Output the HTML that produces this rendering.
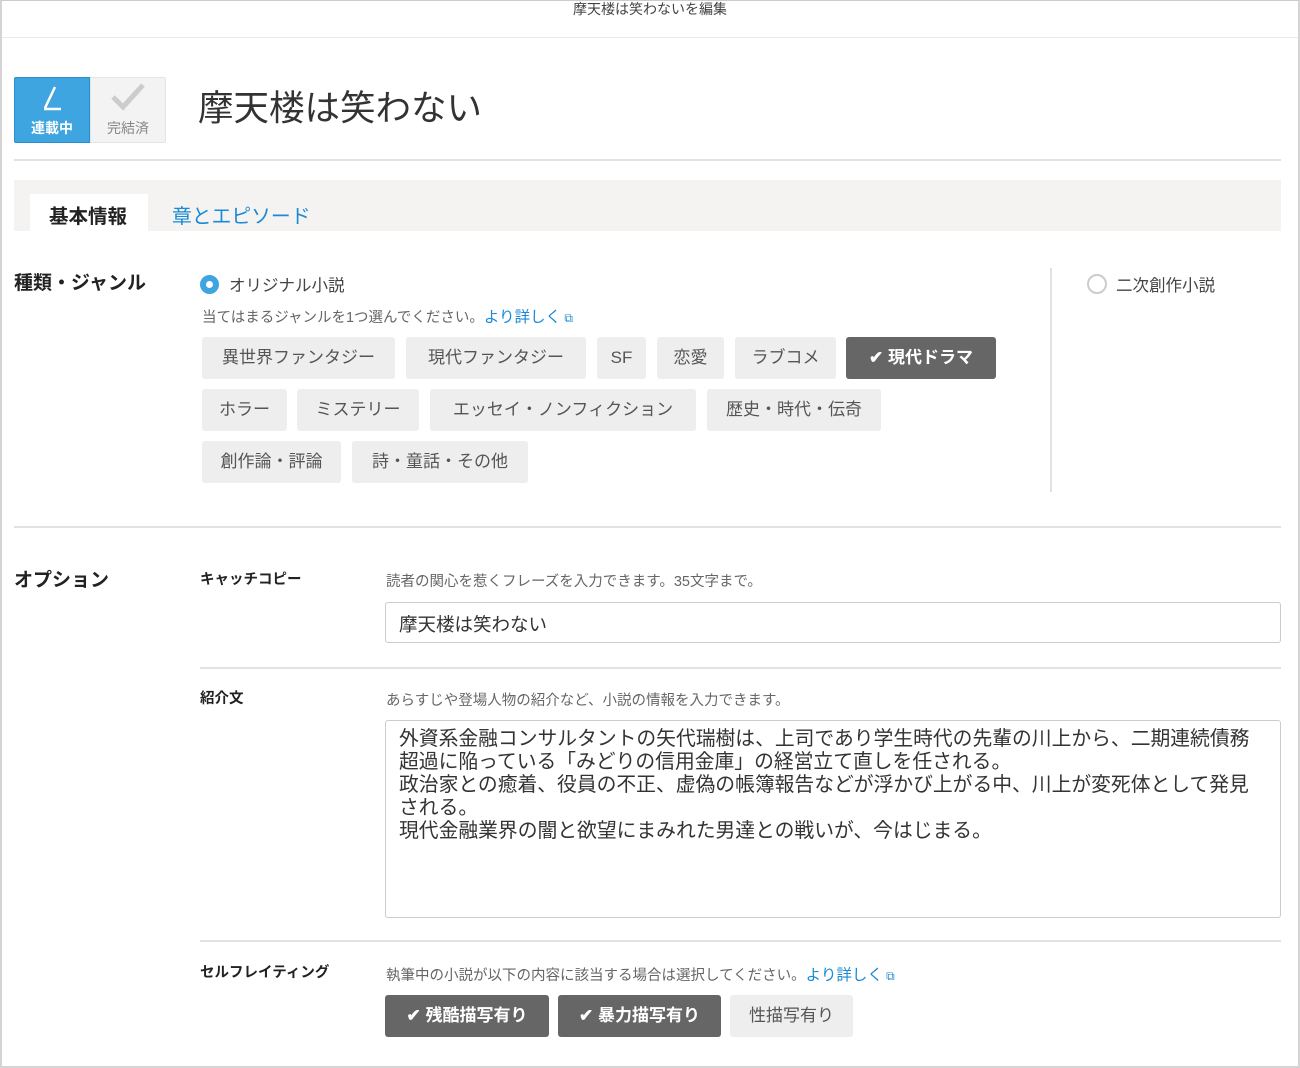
<!DOCTYPE html>
<html><head><meta charset="utf-8"><style>
*{box-sizing:border-box;margin:0;padding:0}
body{width:1300px;height:1068px;background:#fff;font-family:"Liberation Sans","Noto Sans CJK JP",sans-serif;color:#333;position:relative;overflow:hidden}
.a{position:absolute;white-space:nowrap}
.frame{position:absolute;left:0;top:0;width:1300px;height:1068px;border:2px solid #d4d4d4;border-top:1px solid #ccc}
.hl{position:absolute;height:2px;background:#e2e2e2}
.btn{position:absolute;height:42px;background:#eee;border-radius:3px;color:#555;font-size:17px;line-height:42px;text-align:center}
.dk{background:#666;color:#fff;font-weight:bold}
.blue{color:#1a8ad4}
.hint{font-size:14.5px;color:#666}
.lbl{font-size:19px;font-weight:bold;color:#222}
.sl{font-size:14.5px;font-weight:bold;color:#222}
</style></head><body>
<div class="frame"></div>
<div class="a" style="left:0;width:1300px;text-align:center;top:-1px;font-size:14px;color:#444">摩天楼は笑わないを編集</div>
<div class="hl" style="left:2px;width:1296px;top:37px;height:1px;background:#eaeaea"></div>

<div class="a" style="left:14px;top:77px;width:76px;height:66px;background:#3ea5e0;border:1px solid #2a8fcf;border-radius:2px 0 0 2px"></div>
<svg class="a" style="left:38px;top:84px" width="28" height="28" viewBox="0 0 28 28"><path d="M17 3 L7 24 M6 25 H23" stroke="#fff" stroke-width="2.5" fill="none"/></svg>
<div class="a" style="left:14px;top:118px;width:76px;text-align:center;font-size:14px;font-weight:bold;color:#fff">連載中</div>
<div class="a" style="left:90px;top:77px;width:76px;height:66px;background:#f3f3f3;border:1px solid #e4e4e4;border-radius:0 2px 2px 0"></div>
<svg class="a" style="left:110px;top:82px" width="36" height="30" viewBox="0 0 36 30"><path d="M3 15 L13 25 L33 3" stroke="#ccc" stroke-width="5" fill="none"/></svg>
<div class="a" style="left:90px;top:118px;width:76px;text-align:center;font-size:14px;color:#888">完結済</div>
<div class="a" style="left:198px;top:80px;font-size:35.5px;color:#333">摩天楼は笑わない</div>
<div class="hl" style="left:14px;width:1267px;top:159px"></div>

<div class="a" style="left:14px;top:180px;width:1267px;height:51px;background:#f4f3f2"></div>
<div class="a" style="left:30px;top:194px;width:118px;height:37px;background:#fff"></div>
<div class="a lbl" style="left:49px;top:200px;font-size:19.5px">基本情報</div>
<div class="a blue" style="left:172px;top:200px;font-size:19.8px">章とエピソード</div>

<div class="a lbl" style="left:14px;top:268px">種類・ジャンル</div>
<div class="a" style="left:200px;top:275px;width:19px;height:19px;border-radius:50%;border:6px solid #3ea5e0;background:#fff"></div>
<div class="a" style="left:229px;top:272px;font-size:16.5px;color:#444">オリジナル小説</div>
<div class="a hint" style="left:202px;top:305px">当てはまるジャンルを1つ選んでください。<span class="blue" style="font-size:15.5px">より詳しく</span><span class="blue" style="font-size:12px"> ⧉</span></div>

<div class="btn" style="left:202px;top:337px;width:193px">異世界ファンタジー</div>
<div class="btn" style="left:406px;top:337px;width:180px">現代ファンタジー</div>
<div class="btn" style="left:597px;top:337px;width:49px">SF</div>
<div class="btn" style="left:657px;top:337px;width:67px">恋愛</div>
<div class="btn" style="left:735px;top:337px;width:101px">ラブコメ</div>
<div class="btn dk" style="left:846px;top:337px;width:150px">✔ 現代ドラマ</div>
<div class="btn" style="left:202px;top:389px;width:85px">ホラー</div>
<div class="btn" style="left:297px;top:389px;width:122px">ミステリー</div>
<div class="btn" style="left:430px;top:389px;width:266px">エッセイ・ノンフィクション</div>
<div class="btn" style="left:707px;top:389px;width:174px">歴史・時代・伝奇</div>
<div class="btn" style="left:202px;top:441px;width:139px">創作論・評論</div>
<div class="btn" style="left:352px;top:441px;width:176px">詩・童話・その他</div>

<div class="a" style="left:1050px;top:268px;width:2px;height:224px;background:#e2e2e2"></div>
<div class="a" style="left:1087px;top:274px;width:20px;height:20px;border-radius:50%;border:2px solid #ccc"></div>
<div class="a" style="left:1116px;top:272px;font-size:16.5px;color:#444">二次創作小説</div>

<div class="hl" style="left:14px;width:1267px;top:526px"></div>

<div class="a lbl" style="left:14px;top:565px">オプション</div>
<div class="a sl" style="left:200px;top:568px">キャッチコピー</div>
<div class="a hint" style="left:386px;top:570px">読者の関心を惹くフレーズを入力できます。35文字まで。</div>
<div class="a" style="left:385px;top:602px;width:896px;height:41px;border:1px solid #ccc;border-radius:3px"></div>
<div class="a" style="left:399px;top:611px;font-size:18.5px;color:#333">摩天楼は笑わない</div>
<div class="hl" style="left:200px;width:1081px;top:667px"></div>

<div class="a sl" style="left:200px;top:687px">紹介文</div>
<div class="a hint" style="left:386px;top:689px">あらすじや登場人物の紹介など、小説の情報を入力できます。</div>
<div class="a" style="left:385px;top:720px;width:896px;height:198px;border:1px solid #ccc;border-radius:3px"></div>
<div class="a" style="left:399px;top:728px;font-size:19.8px;line-height:23px;color:#333">外資系金融コンサルタントの矢代瑞樹は、上司であり学生時代の先輩の川上から、二期連続債務<br>超過に陥っている「みどりの信用金庫」の経営立て直しを任される。<br>政治家との癒着、役員の不正、虚偽の帳簿報告などが浮かび上がる中、川上が変死体として発見<br>される。<br>現代金融業界の闇と欲望にまみれた男達との戦いが、今はじまる。</div>
<div class="hl" style="left:200px;width:1081px;top:940px"></div>

<div class="a sl" style="left:200px;top:961px">セルフレイティング</div>
<div class="a hint" style="left:386px;top:963px">執筆中の小説が以下の内容に該当する場合は選択してください。<span class="blue" style="font-size:15.5px">より詳しく</span><span class="blue" style="font-size:12px"> ⧉</span></div>
<div class="btn dk" style="left:385px;top:995px;width:164px">✔ 残酷描写有り</div>
<div class="btn dk" style="left:558px;top:995px;width:163px">✔ 暴力描写有り</div>
<div class="btn" style="left:730px;top:995px;width:123px">性描写有り</div>
</body></html>
